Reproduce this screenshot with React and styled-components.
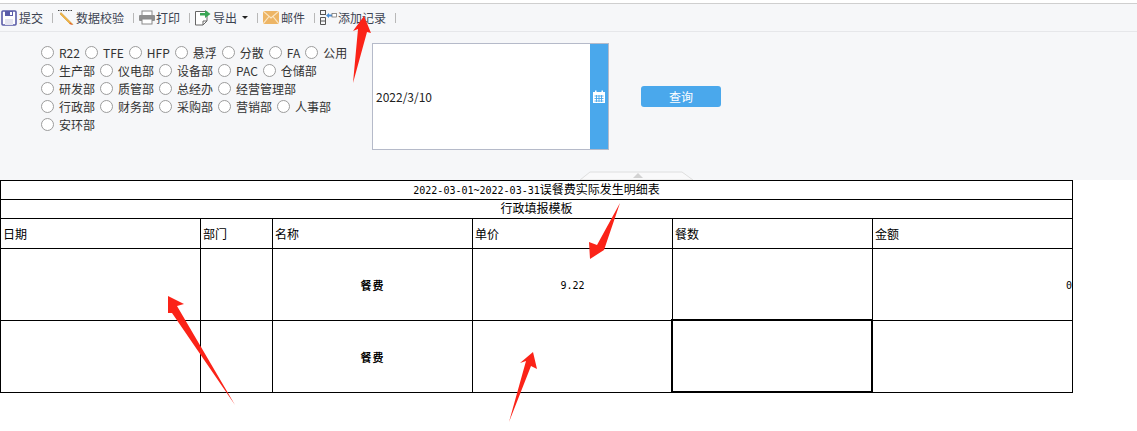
import React, { Fragment } from 'react';
import styled, { createGlobalStyle, css } from 'styled-components';

const FONT = '"Noto Sans CJK SC", "Liberation Sans", sans-serif';

const GlobalStyle = createGlobalStyle`
  html, body {
    margin: 0;
    padding: 0;
    background: #fff;
    font-family: ${FONT};
  }
`;

// styled
const Page = styled.div`
  position: relative;
  width: 1137px;
  height: 431px;
  overflow: hidden;
`;

const TopPanel = styled.div`
  position: relative;
  height: 177px;
  margin-top: 3px;
  box-sizing: border-box;
  background: #f6f7f9;
  border-top: 1px solid #cfcfcf;
`;

const Toolbar = styled.div`
  display: flex;
  align-items: center;
  height: 27px;
  padding-left: 1px;
  border-bottom: 1px solid #e6e7ea;
`;

const ToolButton = styled.div`
  display: flex;
  align-items: center;
  gap: ${(p) => p.$gap ?? 2}px;
  font-size: 12px;
  line-height: 16px;
  color: #3c4352;
  white-space: nowrap;
`;

const ToolSep = styled.span`
  width: 1px;
  height: 10px;
  margin: 0 5px 0 9px;
  background: #b8b8b8;
`;

const Caret = styled.span`
  width: 0;
  height: 0;
  margin-left: 3px;
  border-left: 3px solid transparent;
  border-right: 3px solid transparent;
  border-top: 3px solid #222;
`;

const FilterArea = styled.div`
  display: flex;
  align-items: flex-start;
  padding: 11px 0 0 41px;
`;

const RadioGroup = styled.div`
  width: 331px;
`;

const RadioRow = styled.div`
  display: flex;
  align-items: center;
  height: 18px;
`;

const RadioItem = styled.label`
  display: flex;
  align-items: center;
  gap: 5px;
  margin-right: 5px;
  font-size: 12px;
  color: #333;
  white-space: nowrap;
`;

const RadioDot = styled.span`
  width: 13px;
  height: 13px;
  box-sizing: border-box;
  border: 1px solid #9c9c9c;
  border-radius: 50%;
  background: #fff;
`;

const DateBox = styled.div`
  display: flex;
  width: 237px;
  height: 107px;
  box-sizing: border-box;
  border: 1px solid #b5bac9;
  background: #fff;
`;

const DateText = styled.div`
  flex: 1;
  display: flex;
  align-items: center;
  padding-left: 3px;
  font-size: 12px;
  color: #222;
`;

const DateTrigger = styled.div`
  display: flex;
  align-items: center;
  justify-content: center;
  width: 18px;
  background: #4aa8ec;
`;

const QueryButton = styled.div`
  width: 80px;
  height: 21px;
  margin: 43px 0 0 32px;
  border-radius: 3px;
  background: #4aa8ec;
  color: #fff;
  font-size: 12px;
  line-height: 21px;
  text-align: center;
`;

const CollapseHandle = styled.svg`
  position: absolute;
  left: 578px;
  top: 164px;
`;

const ReportTable = styled.table`
  width: 1072px;
  border-collapse: collapse;
  table-layout: fixed;
  color: #000;
`;

const Cell = styled.td`
  position: relative;
  box-sizing: border-box;
  height: ${(p) => p.$h}px;
  padding: 0 ${(p) => (p.$align === 'right' ? 0 : 2)}px ${(p) => p.$lift ?? 0}px;
  border: 1px solid #000;
  font-size: 12px;
  line-height: 14px;
  text-align: ${(p) => p.$align ?? 'left'};
  vertical-align: middle;
  white-space: nowrap;
  ${(p) =>
    p.$selected &&
    css`
      &::after {
        content: '';
        position: absolute;
        inset: -2px -1px -1px -2px;
        border: 2px solid #000;
      }
    `}
`;

const Mono = styled.span`
  font-family: "DejaVu Sans Mono", monospace;
  font-size: 10px;
`;

const FeeName = styled.span`
  font-size: 11px;
  font-weight: 700;
  letter-spacing: 1px;
`;

const ArrowLayer = styled.svg`
  position: absolute;
  left: 0;
  top: 0;
  pointer-events: none;
`;

// icons
const SaveIcon = () => (
  <svg width="16" height="16" viewBox="0 0 16 16">
    <rect x="1" y="1" width="14" height="14" rx="1" fill="#fff" stroke="#5a5ca8" strokeWidth="1.6" />
    <rect x="4" y="1" width="8" height="5" fill="#5a5ca8" />
    <rect x="9" y="2" width="2" height="3" fill="#fff" />
    <rect x="4" y="9" width="8" height="6" fill="#e4e4f0" />
  </svg>
);

const CheckIcon = () => (
  <svg width="16" height="17" viewBox="0 0 16 17">
    <path d="M0 1.5H15" stroke="#444" strokeWidth="1" strokeDasharray="1.5 1" />
    <path d="M3 3.5L12.5 13L15 15.5L11.5 14.5L2 5Z" fill="#f2b540" stroke="#c98f2a" strokeWidth="0.5" />
    <path d="M12 13.5L15 16L11.5 15Z" fill="#e2552f" />
  </svg>
);

const PrintIcon = () => (
  <svg width="16" height="15" viewBox="0 0 16 15">
    <rect x="3" y="1" width="10" height="5" fill="#fff" stroke="#8a8a8a" />
    <rect x="0" y="5" width="16" height="6" rx="1" fill="#8f8f8f" />
    <rect x="3" y="9" width="10" height="5" fill="#fff" stroke="#8a8a8a" />
  </svg>
);

const ExportIcon = () => (
  <svg width="16" height="17" viewBox="0 0 16 17">
    <path d="M0.5 2.5H12V12L8 16H0.5Z" fill="#fff" stroke="#666" />
    <path d="M8 16V12H12" fill="none" stroke="#666" />
    <path d="M5 4H10V1L15.5 5L10 9V6.5H5Z" fill="#3aa655" />
  </svg>
);

const MailIcon = () => (
  <svg width="16" height="13" viewBox="0 0 16 13">
    <rect width="16" height="13" fill="#edb565" />
    <path d="M0 0L8 7L16 0M0 13L6 5.5M16 13L10 5.5" fill="none" stroke="#fbe6c4" strokeWidth="1.2" />
  </svg>
);

const AddRecordIcon = () => (
  <svg width="17" height="15" viewBox="0 0 17 15">
    <rect x="0.5" y="0.5" width="5" height="4" fill="none" stroke="#555" />
    <path d="M0.5 7.5H5.5V14.5H0.5ZM0.5 11H5.5" fill="none" stroke="#555" />
    <path d="M6 5.5L9 3V4.5H12V6.5H9V8Z" fill="#4a90d9" />
    <rect x="12" y="3.5" width="4.5" height="3.5" fill="#fff" stroke="#666" strokeWidth="0.7" />
  </svg>
);

const CalendarIcon = () => (
  <svg width="14" height="14" viewBox="0 0 14 14">
    <path d="M1 2H13V13H1Z" fill="#fff" />
    <rect x="3" y="0.5" width="1.5" height="3" fill="#fff" />
    <rect x="9.5" y="0.5" width="1.5" height="3" fill="#fff" />
    <path d="M2.5 6H11.5M2.5 8.5H11.5M2.5 11H11.5M4.5 5V12M7 5V12M9.5 5V12" stroke="#4aa8ec" strokeWidth="0.9" />
  </svg>
);

// data
const RADIO_ROWS = [
  ['R22', 'TFE', 'HFP', '悬浮', '分散', 'FA', '公用'],
  ['生产部', '仪电部', '设备部', 'PAC', '仓储部'],
  ['研发部', '质管部', '总经办', '经营管理部'],
  ['行政部', '财务部', '采购部', '营销部', '人事部'],
  ['安环部'],
];

const COLUMNS = [200, 72, 200, 200, 200, 200];
const HEADERS = ['日期', '部门', '名称', '单价', '餐数', '金额'];

const ARROWS = [
  '364,16 371,33 367,32 353,83 358,29 353,31',
  '620,203 604,250 590,259 589,242 597,245',
  '168,296 184,304 177,306 235,405 172,313 168,313',
  '533,352 537,369 531,366 509,422 526,361 520,363',
];

// function
const App = () => (
  <Fragment>
    <GlobalStyle />
    <Page>
      <TopPanel>
        <Toolbar>
          <ToolButton><SaveIcon />提交</ToolButton>
          <ToolSep />
          <ToolButton><CheckIcon />数据校验</ToolButton>
          <ToolSep />
          <ToolButton $gap={1}><PrintIcon />打印</ToolButton>
          <ToolSep />
          <ToolButton><ExportIcon />导出<Caret /></ToolButton>
          <ToolSep />
          <ToolButton><MailIcon />邮件</ToolButton>
          <ToolSep />
          <ToolButton $gap={1}><AddRecordIcon />添加记录</ToolButton>
          <ToolSep />
        </Toolbar>
        <FilterArea>
          <RadioGroup>
            {RADIO_ROWS.map((row, index) => (
              <RadioRow key={index}>
                {row.map((name) => (
                  <RadioItem key={name}>
                    <RadioDot />
                    {name}
                  </RadioItem>
                ))}
              </RadioRow>
            ))}
          </RadioGroup>
          <DateBox>
            <DateText>2022/3/10</DateText>
            <DateTrigger><CalendarIcon /></DateTrigger>
          </DateBox>
          <QueryButton>查询</QueryButton>
        </FilterArea>
        <CollapseHandle width="120" height="12" viewBox="0 0 120 12">
          <path d="M2 12L12 4H104L115 12Z" fill="#f9f9fa" stroke="#dedede" />
          <path d="M55 10L60 5L65 10Z" fill="#d2d2d2" />
        </CollapseHandle>
      </TopPanel>
      <ReportTable>
        <colgroup>
          {COLUMNS.map((width, index) => (
            <col key={index} style={{ width }} />
          ))}
        </colgroup>
        <tbody>
          <tr>
            <Cell colSpan={6} $h={19} $align="center" $lift={1}>
              <Mono>2022-03-01~2022-03-31</Mono>误餐费实际发生明细表
            </Cell>
          </tr>
          <tr>
            <Cell colSpan={6} $h={19} $align="center" $lift={2}>行政填报模板</Cell>
          </tr>
          <tr>
            {HEADERS.map((title) => (
              <Cell key={title} $h={30}>{title}</Cell>
            ))}
          </tr>
          <tr>
            <Cell $h={72} />
            <Cell />
            <Cell $align="center"><FeeName>餐费</FeeName></Cell>
            <Cell $align="center"><Mono>9.22</Mono></Cell>
            <Cell />
            <Cell $align="right"><Mono>0</Mono></Cell>
          </tr>
          <tr>
            <Cell $h={72} />
            <Cell />
            <Cell $align="center"><FeeName>餐费</FeeName></Cell>
            <Cell />
            <Cell $selected />
            <Cell />
          </tr>
        </tbody>
      </ReportTable>
      <ArrowLayer width="1137" height="431" viewBox="0 0 1137 431">
        {ARROWS.map((points) => (
          <polygon key={points} points={points} fill="#fb2318" />
        ))}
      </ArrowLayer>
    </Page>
  </Fragment>
);

export default App;
